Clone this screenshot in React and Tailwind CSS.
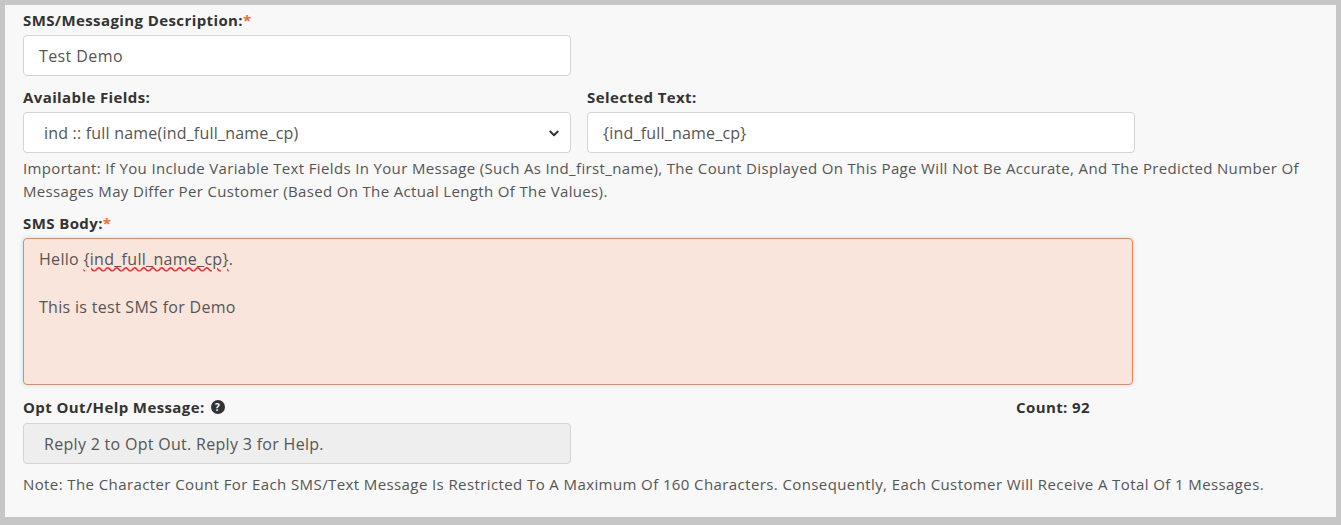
const Label = ({ children, required }) => (
    <div className="text-[15px] font-bold text-[#333] leading-[18px] tracking-[0.4px] mb-[6px]">
        {children}
        {required && <span className="text-[#f36f2e]">*</span>}
    </div>
);

export default function App() {
    return (
        <div className="w-[1341px] h-[525px] bg-[#c6c6c6] p-[5px] pb-[8px]" style={{ fontFamily: '"Open Sans", sans-serif' }}>
            <div className="h-full bg-[#f8f8f8] pl-[18px] pt-[6px] text-[#555]">
                <Label required>SMS/Messaging Description:</Label>
                <div className="w-[548px] h-[41px] bg-white border border-[#d4d4d4] rounded-[4px] px-[15px] flex items-center text-[16px] tracking-[0.4px] text-[#555]">Test Demo</div>

                <div className="flex gap-[16px] mt-[12px]">
                    <div>
                        <Label>Available Fields:</Label>
                        <div className="w-[548px] h-[41px] bg-white border border-[#d4d4d4] rounded-[4px] pl-[20px] pr-[10px] flex items-center justify-between text-[16px] tracking-[0.2px] text-[#555]">
                            <span>ind :: full name(ind_full_name_cp)</span>
                            <svg width="12" height="12" viewBox="0 0 16 16" fill="none" stroke="#333" strokeWidth="2.5" strokeLinecap="round" strokeLinejoin="round"><path d="M3 6l5 5 5-5" /></svg>
                        </div>
                    </div>
                    <div>
                        <Label>Selected Text:</Label>
                        <div className="w-[548px] h-[41px] bg-white border border-[#d4d4d4] rounded-[4px] px-[15px] flex items-center text-[16px] tracking-[0.2px] text-[#555]">{'{ind_full_name_cp}'}</div>
                    </div>
                </div>

                <p className="text-[15px] leading-[23px] tracking-[0.35px] text-[#555] mt-[4px] w-[1300px]">
                    Important: If You Include Variable Text Fields In Your Message (Such As Ind_first_name), The Count Displayed On This Page Will Not Be Accurate, And The Predicted Number Of Messages May Differ Per Customer (Based On The Actual Length Of The Values).
                </p>

                <div className="mt-[11px]"><Label required>SMS Body:</Label></div>
                <div className="w-[1110px] h-[147px] bg-[#fae5dc] border border-[#f3844e] rounded-[4px] px-[15px] pt-[8px] text-[16px] tracking-[0.3px] text-[#555] leading-[24px] shadow-[0_0_4px_rgba(102,175,233,0.4)]">
                    <div>Hello <span className="underline decoration-wavy decoration-red-500">{'{ind_full_name_cp}'}</span>.</div>
                    <div className="mt-[24px]">This is test SMS for Demo</div>
                </div>

                <div className="flex mt-[13px] w-[1110px]">
                    <div className="w-[993px] flex items-center gap-[6px] text-[15px] font-bold text-[#333] leading-[18px] tracking-[0.4px]">
                        Opt Out/Help Message:
                        <span className="w-[14px] h-[14px] rounded-full bg-[#333] text-white text-[10px] flex items-center justify-center leading-none">?</span>
                    </div>
                    <div className="text-[15px] font-bold text-[#333] leading-[18px] tracking-[0.4px]">Count: 92</div>
                </div>
                <div className="w-[548px] h-[41px] mt-[7px] bg-[#eeeeee] border border-[#d4d4d4] rounded-[4px] px-[20px] flex items-center text-[16px] tracking-[0.3px] text-[#555]">Reply 2 to Opt Out. Reply 3 for Help.</div>

                <p className="text-[15px] leading-[21px] tracking-[0.4px] text-[#555] mt-[10px] whitespace-nowrap">
                    Note: The Character Count For Each SMS/Text Message Is Restricted To A Maximum Of 160 Characters. Consequently, Each Customer Will Receive A Total Of 1 Messages.
                </p>
            </div>
        </div>
    );
}
